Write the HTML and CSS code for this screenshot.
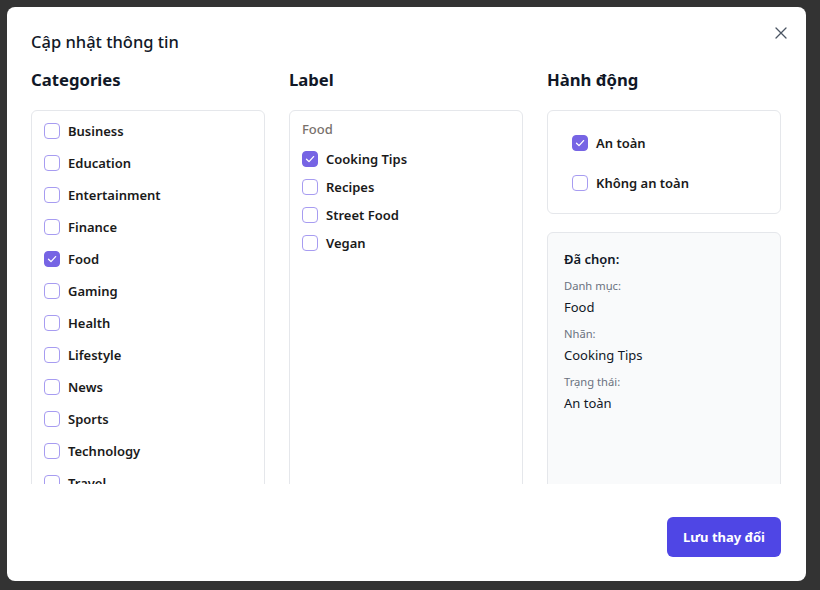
FILE: index.html
```html
<!DOCTYPE html>
<html lang="vi">
<head>
<meta charset="utf-8">
<title>Cập nhật thông tin</title>
<link rel="stylesheet" href="styles.css">
</head>
<body>
<div class="backdrop">
  <div class="modal">
    <div class="modal-header">
      <h2 class="modal-title">Cập nhật thông tin</h2>
      <button class="close-btn" aria-label="Đóng">
        <svg width="12" height="12" viewBox="0 0 12 12"><path d="M1 1L11 11M11 1L1 11" stroke="#4b5563" stroke-width="1.3" stroke-linecap="round"/></svg>
      </button>
    </div>
    <div class="modal-body">
      <div class="col">
        <h3 class="col-title">Categories</h3>
        <div class="box list">
          <label class="row"><span class="cb"></span>Business</label>
          <label class="row"><span class="cb"></span>Education</label>
          <label class="row"><span class="cb"></span>Entertainment</label>
          <label class="row"><span class="cb"></span>Finance</label>
          <label class="row"><span class="cb checked"><svg viewBox="0 0 16 16"><path d="M4.5 8.2L7 10.6L11.6 5.6" fill="none" stroke="#fff" stroke-width="1.3" stroke-linecap="round" stroke-linejoin="round"/></svg></span>Food</label>
          <label class="row"><span class="cb"></span>Gaming</label>
          <label class="row"><span class="cb"></span>Health</label>
          <label class="row"><span class="cb"></span>Lifestyle</label>
          <label class="row"><span class="cb"></span>News</label>
          <label class="row"><span class="cb"></span>Sports</label>
          <label class="row"><span class="cb"></span>Technology</label>
          <label class="row"><span class="cb"></span>Travel</label>
        </div>
      </div>
      <div class="col">
        <h3 class="col-title">Label</h3>
        <div class="box labels">
          <div class="group-name">Food</div>
          <div class="group-items">
            <label class="row"><span class="cb checked"><svg viewBox="0 0 16 16"><path d="M4.5 8.2L7 10.6L11.6 5.6" fill="none" stroke="#fff" stroke-width="1.3" stroke-linecap="round" stroke-linejoin="round"/></svg></span>Cooking Tips</label>
            <label class="row"><span class="cb"></span>Recipes</label>
            <label class="row"><span class="cb"></span>Street Food</label>
            <label class="row"><span class="cb"></span>Vegan</label>
          </div>
        </div>
      </div>
      <div class="col">
        <h3 class="col-title">Hành động</h3>
        <div class="box actions">
          <label class="row"><span class="cb checked"><svg viewBox="0 0 16 16"><path d="M4.5 8.2L7 10.6L11.6 5.6" fill="none" stroke="#fff" stroke-width="1.3" stroke-linecap="round" stroke-linejoin="round"/></svg></span>An toàn</label>
          <label class="row"><span class="cb"></span>Không an toàn</label>
        </div>
        <div class="box summary">
          <div class="summary-title">Đã chọn:</div>
          <div class="sum-group">
            <div class="sum-label">Danh mục:</div>
            <div class="sum-value">Food</div>
          </div>
          <div class="sum-group">
            <div class="sum-label">Nhãn:</div>
            <div class="sum-value">Cooking Tips</div>
          </div>
          <div class="sum-group">
            <div class="sum-label">Trạng thái:</div>
            <div class="sum-value">An toàn</div>
          </div>
        </div>
      </div>
    </div>
    <div class="modal-footer">
      <button class="save-btn">Lưu thay đổi</button>
    </div>
  </div>
</div>
</body>
</html>
```
FILE: styles.css
```css
* { box-sizing: border-box; }
html, body { margin: 0; padding: 0; }
body {
  background: #333333;
  font-family: "Noto Sans", "Open Sans", sans-serif;
  color: #111827;
  width: 820px;
  height: 590px;
  overflow: hidden;
}
.backdrop {
  width: 820px;
  height: 590px;
  padding: 7px 14px 9px 7px;
}
.modal {
  width: 799px;
  height: 574px;
  background: #ffffff;
  border-radius: 8px;
  display: flex;
  flex-direction: column;
}
.modal-header {
  display: flex;
  justify-content: space-between;
  align-items: flex-start;
  padding: 21px 19px 0 24px;
}
.modal-title {
  margin: 0;
  font-size: 16.5px;
  line-height: 28px;
  font-weight: 500;
  color: #111827;
}
.close-btn {
  border: 0;
  background: none;
  padding: 0;
  margin-top: -1px;
  width: 12px;
  height: 12px;
  display: flex;
}
.modal-body {
  display: grid;
  grid-template-columns: 234px 234px 234px;
  column-gap: 24px;
  padding: 10px 24px 0 24px;
  height: 428px;
  overflow: hidden;
}
.col {
  display: flex;
  flex-direction: column;
}
.col-title {
  margin: 0 0 16px 0;
  font-size: 16.7px;
  line-height: 28px;
  font-weight: 700;
  color: #111827;
}
.box {
  border: 1px solid #e5e7eb;
  border-radius: 6px;
  background: #fff;
}
.row {
  display: flex;
  align-items: center;
  gap: 8px;
  font-size: 13px;
  line-height: 20px;
  font-weight: 600;
  color: #1a1a1a;
}
.cb {
  width: 16px;
  height: 16px;
  flex: none;
  border: 1.5px solid #a79cf1;
  border-radius: 4px;
  background: #fff;
  display: flex;
}
.cb.checked {
  background: #7664e4;
  border-color: #7664e4;
}
.cb svg {
  width: 16px;
  height: 16px;
  margin: -1.5px;
}
.list {
  display: flex;
  flex-direction: column;
  gap: 12px;
  padding: 10px 12px;
  min-height: 500px;
}
.labels {
  padding: 8px 12px;
  min-height: 500px;
}
.group-name {
  font-size: 13px;
  line-height: 20px;
  font-weight: 500;
  color: #78716c;
  margin-bottom: 10px;
}
.group-items {
  display: flex;
  flex-direction: column;
  gap: 8px;
}
.actions {
  display: flex;
  flex-direction: column;
  gap: 20px;
  padding: 22px 24px 20px 24px;
}
.summary {
  margin-top: 18px;
  background: #f9fafb;
  padding: 16px;
  min-height: 320px;
}
.summary-title {
  font-size: 13px;
  line-height: 20px;
  font-weight: 600;
  color: #111827;
  margin-bottom: 9px;
}
.sum-group {
  margin-bottom: 9px;
}
.sum-label {
  font-size: 11.2px;
  line-height: 16px;
  color: #6b7280;
  margin-bottom: 3px;
}
.sum-value {
  font-size: 13px;
  line-height: 20px;
  color: #111827;
}
.modal-footer {
  display: flex;
  justify-content: flex-end;
  padding: 33px 25px 24px 24px;
}
.save-btn {
  height: 40px;
  padding: 0 16px;
  border: 0;
  border-radius: 6px;
  background: #4f46e5;
  color: #fff;
  font-family: inherit;
  font-size: 13px;
  font-weight: 700;
}
```
